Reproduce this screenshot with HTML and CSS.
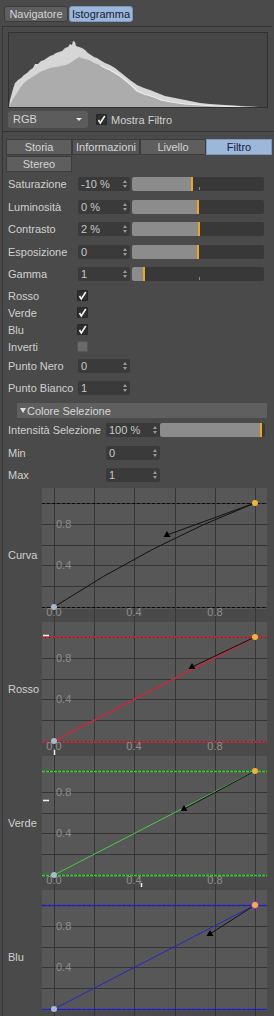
FILE: index.html
```html
<!DOCTYPE html>
<html>
<head>
  <meta charset="utf-8">
  <title>Istogramma</title>
  <link rel="stylesheet" href="styles.css">
</head>
<body>
  <div class="top-tabs">
    <div class="tab">Navigatore</div>
    <div class="tab active">Istogramma</div>
  </div>

  <div class="histo-panel">
    <div class="histo">
      <svg width="258" height="74" viewBox="0 0 258 74">
        <polygon class="h-light" points="0,74 1,67 4,56 6,50 9,47 12,45 15,42 18,40 21,37 24,35 26,31 29,31 32,28 35,27 38,25 41,23 44,22 47,20 50,19 53,18 56,15 59,14 61,11 63,12 64,8 66,9 67,13 70,14 73,15 76,17 79,20 82,22 85,24 88,25 91,27 96,30 101,32 106,35 111,39 116,43 121,47 128,52 135,55 141,57 146,59 151,61 156,63 161,64 166,65 171,66 181,68 191,70 201,71 216,72 231,73 251,74"/>
        <polygon class="h-mid" points="0,74 2,70 4,66 8,60 11,55 15,50 20,46 25,43 31,39 36,37 41,35 47,34 52,33 57,32 61,30 64,28 67,26 70,24 73,25 76,26 80,27 85,30 91,32 96,35 101,37 106,40 111,43 116,47 122,52 128,58 135,61 145,64 152,67 162,69 176,71 191,72 206,73 231,74"/>
        <polyline class="h-line" points="91,32 96,35 101,37 106,40 111,43 116,47 122,52 128,58 135,61 145,64 152,67 162,69 176,71 191,72 206,73 231,73.5"/>
      </svg>
    </div>
    <div class="histo-ctrl">
      <div class="dropdown">RGB<span class="caret"></span></div>
      <span class="check on">
        <svg width="11" height="11" viewBox="0 0 11 11"><path d="M2.5 6 L4.3 9 L8.8 2"/></svg>
      </span>
      <span class="check-label">Mostra Filtro</span>
    </div>
  </div>

  <div class="panel">
    <div class="tab-grid">
      <div class="tab">Storia</div>
      <div class="tab dim">Informazioni</div>
      <div class="tab">Livello</div>
      <div class="tab active">Filtro</div>
      <div class="tab">Stereo</div>
    </div>

    <div class="row first">
      <span class="label">Saturazione</span>
      <div class="field">-10 %<span class="spin"></span></div>
      <div class="slider"><div class="fill" style="width: 61px"></div><span class="tick" style="left: 67px"></span></div>
    </div>
    <div class="row">
      <span class="label">Luminosità</span>
      <div class="field">0 %<span class="spin"></span></div>
      <div class="slider"><div class="fill" style="width: 67px"></div></div>
    </div>
    <div class="row">
      <span class="label">Contrasto</span>
      <div class="field">2 %<span class="spin"></span></div>
      <div class="slider"><div class="fill" style="width: 68px"></div></div>
    </div>
    <div class="row">
      <span class="label">Esposizione</span>
      <div class="field">0<span class="spin"></span></div>
      <div class="slider"><div class="fill" style="width: 67px"></div></div>
    </div>
    <div class="row last">
      <span class="label">Gamma</span>
      <div class="field">1<span class="spin"></span></div>
      <div class="slider"><div class="fill" style="width: 13px"></div><span class="tick" style="left: 67px"></span></div>
    </div>

    <div class="check-row">
      <span class="label">Rosso</span>
      <span class="check on"><svg width="11" height="11" viewBox="0 0 11 11"><path d="M2.5 6 L4.3 9 L8.8 2"/></svg></span>
    </div>
    <div class="check-row">
      <span class="label">Verde</span>
      <span class="check on"><svg width="11" height="11" viewBox="0 0 11 11"><path d="M2.5 6 L4.3 9 L8.8 2"/></svg></span>
    </div>
    <div class="check-row">
      <span class="label">Blu</span>
      <span class="check on"><svg width="11" height="11" viewBox="0 0 11 11"><path d="M2.5 6 L4.3 9 L8.8 2"/></svg></span>
    </div>
    <div class="check-row">
      <span class="label">Inverti</span>
      <span class="check off"></span>
    </div>

    <div class="row point">
      <span class="label">Punto Nero</span>
      <div class="field">0<span class="spin"></span></div>
    </div>
    <div class="row point">
      <span class="label">Punto Bianco</span>
      <div class="field">1<span class="spin"></span></div>
    </div>

    <div class="section-head"><span class="arrow"></span>Colore Selezione</div>

    <div class="row wide first">
      <span class="label">Intensità Selezione</span>
      <div class="field">100 %<span class="spin"></span></div>
      <div class="slider"><div class="fill" style="width: 102px"></div><span class="tick" style="left: 53px"></span></div>
    </div>
    <div class="row wide">
      <span class="label">Min</span>
      <div class="field">0<span class="spin"></span></div>
    </div>
    <div class="row wide">
      <span class="label">Max</span>
      <div class="field">1<span class="spin"></span></div>
    </div>

    <div class="graphs">
      <div class="graph">
        <div class="graph-label">Curva</div>
        <svg class="plot" width="232" height="134" viewBox="0 0 232 134">
          <rect class="plot-bg" x="0" y="0" width="225" height="121"/>
          <rect class="plot-edge" x="225" y="0" width="7" height="134"/>
          <path class="grid" d="M12.5 0V134M52.5 0V134M92.5 0V134M133.5 0V134M173.5 0V134M213.5 0V134M0 15.5H225M0 36.5H225M0 57.5H225M0 77.5H225M0 98.5H225M0 119.5H225"/>
          <path class="limit lim-black" d="M0 15.5H225M0 119.5H225"/>
          <text class="axis" x="14" y="36">0.8</text>
          <text class="axis" x="14" y="77">0.4</text>
          <text class="axis mid" x="12" y="124">0.0</text>
          <text class="axis mid" x="92" y="124">0.4</text>
          <text class="axis mid" x="173" y="124">0.8</text>
          <path class="curve c-black" d="M12 119 Q110 55 213 15"/>
          <path class="handle" d="M213 15 L125 47"/>
          <polygon class="knob" points="125,43 121.5,49 128.5,49"/>
          <circle class="p-start" cx="12" cy="119" r="3"/>
          <circle class="p-end" cx="213" cy="15" r="3"/>
        </svg>
      </div>

      <div class="graph">
        <div class="graph-label">Rosso</div>
        <svg class="plot" width="232" height="134" viewBox="0 0 232 134">
          <rect class="plot-bg" x="0" y="0" width="225" height="121"/>
          <rect class="plot-edge" x="225" y="0" width="7" height="134"/>
          <path class="grid" d="M12.5 0V134M52.5 0V134M92.5 0V134M133.5 0V134M173.5 0V134M213.5 0V134M0 15.5H225M0 36.5H225M0 57.5H225M0 77.5H225M0 98.5H225M0 119.5H225"/>
          <path class="limit lim-red" d="M0 15H225M0 120H225"/>
          <text class="axis" x="14" y="36">0.8</text>
          <text class="axis" x="14" y="77">0.4</text>
          <text class="axis mid" x="12" y="124">0.0</text>
          <text class="axis mid" x="92" y="124">0.4</text>
          <text class="axis mid" x="173" y="124">0.8</text>
          <path class="mark" d="M1 13.5H7M12.5 128V133"/>
          <path class="curve c-red thick" d="M12 119 L213 15"/>
          <path class="handle" d="M213 15 L150 45"/>
          <polygon class="knob" points="150,41 146.5,47 153.5,47"/>
          <circle class="p-start" cx="12" cy="119" r="3"/>
          <circle class="p-end" cx="213" cy="15" r="3"/>
        </svg>
      </div>

      <div class="graph">
        <div class="graph-label">Verde</div>
        <svg class="plot" width="232" height="134" viewBox="0 0 232 134">
          <rect class="plot-bg" x="0" y="0" width="225" height="121"/>
          <rect class="plot-edge" x="225" y="0" width="7" height="134"/>
          <path class="grid" d="M12.5 0V134M52.5 0V134M92.5 0V134M133.5 0V134M173.5 0V134M213.5 0V134M0 15.5H225M0 36.5H225M0 57.5H225M0 77.5H225M0 98.5H225M0 119.5H225"/>
          <path class="limit lim-green" d="M0 15.5H225M0 119.5H225"/>
          <text class="axis" x="14" y="36">0.8</text>
          <text class="axis" x="14" y="77">0.4</text>
          <text class="axis mid" x="12" y="124">0.0</text>
          <text class="axis mid" x="92" y="124">0.4</text>
          <text class="axis mid" x="173" y="124">0.8</text>
          <path class="mark" d="M1 44.5H7M99.5 127V131"/>
          <path class="curve c-green" d="M12 119 L213 15"/>
          <path class="handle" d="M213 15 L142 53"/>
          <polygon class="knob" points="142,49 138.5,55 145.5,55"/>
          <circle class="p-start" cx="12" cy="119" r="3"/>
          <circle class="p-end" cx="213" cy="15" r="3"/>
        </svg>
      </div>

      <div class="graph">
        <div class="graph-label">Blu</div>
        <svg class="plot" width="232" height="134" viewBox="0 0 232 134">
          <rect class="plot-bg" x="0" y="0" width="225" height="121"/>
          <rect class="plot-edge" x="225" y="0" width="7" height="134"/>
          <path class="grid" d="M12.5 0V134M52.5 0V134M92.5 0V134M133.5 0V134M173.5 0V134M213.5 0V134M0 15.5H225M0 36.5H225M0 57.5H225M0 77.5H225M0 98.5H225M0 119.5H225"/>
          <path class="limit lim-blue" d="M0 15.5H225M0 119.5H225"/>
          <text class="axis" x="14" y="36">0.8</text>
          <text class="axis" x="14" y="77">0.4</text>
          <path class="curve c-blue" d="M12 119 L213 15"/>
          <path class="handle" d="M213 15 L168 44"/>
          <polygon class="knob" points="168,40 164.5,46 171.5,46"/>
          <circle class="p-start" cx="12" cy="119" r="3"/>
          <circle class="p-ring" cx="213" cy="15" r="4"/>
          <circle class="p-end" cx="213" cy="15" r="3"/>
        </svg>
      </div>
    </div>
  </div>
</body>
</html>
```

FILE: styles.css
```css
body {
  width: 274px;
  height: 1016px;
  margin: 0;
  overflow: hidden;
  background: #4a4a4a;
  font-family: "Liberation Sans", Arial, sans-serif;
  font-size: 11px;
  color: #d0d0d0;
}

/* tabs */

.top-tabs {
  display: flex;
  gap: 1px;
  padding: 6px 0 0 4px;
}

.tab {
  height: 16px;
  line-height: 14px;
  box-sizing: border-box;
  text-align: center;
  white-space: nowrap;
  background: #5e5e5e;
  border: 1px solid #3c3c3c;
  color: #d4d4d4;
  font-size: 11px;
}

.top-tabs .tab {
  width: 64px;
  border-radius: 3px;
}

.tab.active {
  background: #9cb7da;
  border-color: #7e96b8;
  color: #14203a;
}

.tab.dim {
  background: #555555;
}

/* histogram */

.histo-panel {
  margin: 4px 2px 0 2px;
  border-top: 1px solid #363636;
  border-left: 1px solid #363636;
  padding: 5px 0 3px 5px;
}

.histo {
  width: 260px;
  height: 76px;
  box-sizing: border-box;
  background: #464646;
  border: 1px solid #303030;
  overflow: hidden;
}

.histo svg {
  display: block;
}

.h-light {
  fill: #d6d6d6;
}

.h-mid {
  fill: #acacac;
}

.h-line {
  fill: none;
  stroke: #ececec;
  stroke-width: 1.2;
}

.histo-ctrl {
  display: flex;
  align-items: center;
  height: 17px;
  margin-top: 3px;
}

.dropdown {
  position: relative;
  width: 80px;
  height: 17px;
  line-height: 17px;
  box-sizing: border-box;
  padding-left: 5px;
  background: #5c5c5c;
  border-radius: 3px;
  color: #d4d4d4;
}

.caret {
  position: absolute;
  right: 6px;
  top: 7px;
  border-left: 3px solid transparent;
  border-right: 3px solid transparent;
  border-top: 3px solid #e8e8e8;
}

.check {
  display: inline-flex;
  width: 11px;
  height: 11px;
  border-radius: 2px;
  background: #2f2f2f;
  box-shadow: inset 0 0 0 1px #262626;
}

.check svg path {
  fill: none;
  stroke: #f2f2f2;
  stroke-width: 1.6;
}

.check.off {
  background: #6a6a6a;
  box-shadow: inset 0 0 0 1px #555;
}

.histo-ctrl .check {
  margin-left: 8px;
}

.check-label {
  margin-left: 4px;
}

/* filter panel */

.panel {
  margin-left: 2px;
  border-top: 1px solid #363636;
  border-left: 1px solid #363636;
}

.tab-grid {
  display: grid;
  grid-template-columns: 66px 68px 66px 66px;
  grid-auto-rows: 16px;
  row-gap: 1px;
  margin: 7px 0 0 3px;
}

.row {
  display: flex;
  align-items: center;
  height: 14px;
  margin-bottom: 8.5px;
}

.row.first {
  margin-top: 5px;
}

.row.last {
  margin-bottom: 6px;
}

.label {
  flex: none;
  width: 70px;
  padding-left: 5px;
  white-space: nowrap;
}

.field {
  position: relative;
  flex: none;
  width: 52px;
  height: 14px;
  line-height: 14px;
  box-sizing: border-box;
  padding-left: 3px;
  background: #3a3a3a;
  border-radius: 2px;
  color: #c8c8c8;
}

.spin::before,
.spin::after {
  content: "";
  position: absolute;
  right: 3px;
  border-left: 2px solid transparent;
  border-right: 2px solid transparent;
}

.spin::before {
  top: 3px;
  border-bottom: 3px solid #9a9a9a;
}

.spin::after {
  bottom: 3px;
  border-top: 3px solid #9a9a9a;
}

.slider {
  position: relative;
  flex: none;
  width: 132px;
  height: 14px;
  margin-left: 2px;
  box-sizing: border-box;
  background: #383838;
  border-radius: 2px;
  overflow: hidden;
}

.fill {
  height: 100%;
  box-sizing: border-box;
  background: #8c8c8c;
  border-right: 2px solid #f2a51c;
}

.tick {
  position: absolute;
  bottom: 1px;
  width: 1px;
  height: 3px;
  background: #8a8a8a;
}

.check-row {
  display: flex;
  align-items: center;
  height: 17px;
}

.check-row .label {
  width: 69px;
}

.row.point {
  margin-bottom: 8px;
}

.check-row + .row.point {
  margin-top: 4px;
}

.section-head {
  display: flex;
  align-items: center;
  width: 250px;
  height: 15px;
  margin: 0 0 0 14px;
  background: #5f5f5f;
  color: #d8d8d8;
}

.arrow {
  width: 0;
  height: 0;
  margin: 0 1px 0 3px;
  border-left: 3px solid transparent;
  border-right: 3px solid transparent;
  border-top: 5px solid #e0e0e0;
}

.row.wide .label {
  width: 98px;
}

.row.wide .field {
  width: 54px;
}

.row.wide .slider {
  width: 105px;
  margin-left: 0;
}

.row.wide.first {
  margin-top: 5px;
}

/* curves */

.graphs {
  margin-top: -3px;
}

.graph {
  display: flex;
  height: 134px;
}

.graph-label {
  display: flex;
  align-items: center;
  width: 34px;
  padding-left: 5px;
  flex: none;
}

.plot {
  display: block;
  flex: none;
}

.plot-bg {
  fill: #575757;
}

.plot-edge {
  fill: #4a4a4a;
}

.grid {
  fill: none;
  stroke: #353535;
  stroke-width: 1;
}

.limit {
  fill: none;
  stroke-width: 1;
  stroke-dasharray: 3 2;
}

.lim-black { stroke: #0c0c0c; }
.lim-red { stroke: #b82a3e; stroke-width: 2; stroke-dasharray: 3 1; }
.lim-green { stroke: #22d822; stroke-width: 1.5; stroke-dasharray: 3 1; }
.lim-blue { stroke: #1e1ed8; stroke-width: 1.5; stroke-dasharray: 4 1; }

.axis {
  font-family: "Liberation Sans", Arial, sans-serif;
  font-size: 11px;
  fill: #8e8e8e;
  dominant-baseline: central;
}

.axis.mid {
  text-anchor: middle;
}

.mark {
  fill: none;
  stroke: #f0f0f0;
  stroke-width: 1.5;
}

.curve {
  fill: none;
  stroke-width: 1;
}

.curve.thick {
  stroke-width: 1.6;
}

.c-black { stroke: #111111; }
.c-red { stroke: #b8303e; }
.c-green { stroke: #44cc44; }
.c-blue { stroke: #2626c8; }

.handle {
  fill: none;
  stroke: #111111;
  stroke-width: 1;
}

.knob {
  fill: #000000;
}

.p-start {
  fill: #a6bacb;
}

.p-end {
  fill: #f4b233;
}

.p-ring {
  fill: #7a3ad0;
}
```
